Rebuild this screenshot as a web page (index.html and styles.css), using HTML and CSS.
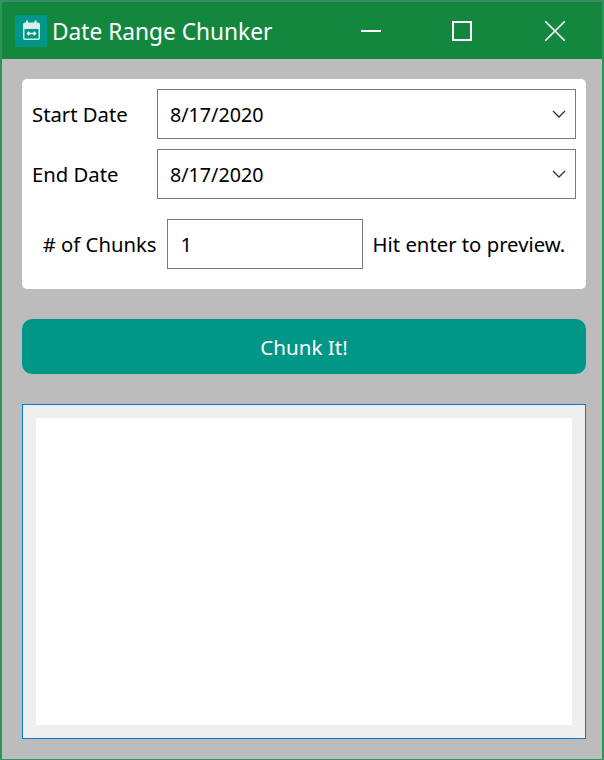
FILE: index.html
```html
<!DOCTYPE html>
<html lang="en">
<head>
    <meta charset="UTF-8">
    <meta name="viewport" content="width=device-width, initial-scale=1.0">
    <title>Date Range Chunker</title>
    <link rel="stylesheet" href="styles.css">
</head>
<body>
    <div class="window">
        <div class="title-bar">
            <div class="app-icon">
                <svg width="32" height="32" viewBox="0 0 32 32" fill="none">
                    <rect x="8" y="7.5" width="17" height="17.5" rx="2" fill="#d5efe9"/>
                    <rect x="9.5" y="14" width="14" height="9.5" fill="#009688"/>
                    <path d="M12 5.5v4M20.5 5.5v4" stroke="#d5efe9" stroke-width="2"/>
                    <path d="M12.5 18.5h8M14.2 16.7l-1.8 1.8 1.8 1.8M18.8 16.7l1.8 1.8-1.8 1.8" stroke="#fff" stroke-width="1.3"/>
                </svg>
            </div>
            <div class="title-text">Date Range Chunker</div>
            <div class="window-controls">
                <div class="win-btn">
                    <svg width="20" height="20" viewBox="0 0 20 20"><path d="M0 10h20" stroke="#fff" stroke-width="2"/></svg>
                </div>
                <div class="win-btn">
                    <svg width="20" height="20" viewBox="0 0 20 20" fill="none"><rect x="1" y="1" width="18" height="18" stroke="#fff" stroke-width="2"/></svg>
                </div>
                <div class="win-btn win-close">
                    <svg width="20" height="20" viewBox="0 0 20 20"><path d="M0 0L20 20M20 0L0 20" stroke="#eee" stroke-width="1.6"/></svg>
                </div>
            </div>
        </div>

        <div class="content">
            <div class="card">
                <div class="date-row">
                    <label class="date-label">Start Date</label>
                    <div class="combo">
                        <span>8/17/2020</span>
                        <svg class="chevron" width="14" height="8" viewBox="0 0 14 8" fill="none"><path d="M1 1l6 6 6-6" stroke="#333" stroke-width="1.3"/></svg>
                    </div>
                </div>
                <div class="date-row">
                    <label class="date-label">End Date</label>
                    <div class="combo">
                        <span>8/17/2020</span>
                        <svg class="chevron" width="14" height="8" viewBox="0 0 14 8" fill="none"><path d="M1 1l6 6 6-6" stroke="#333" stroke-width="1.3"/></svg>
                    </div>
                </div>
                <div class="chunk-row">
                    <label>&#35; of Chunks</label>
                    <input class="chunk-input" type="text" value="1">
                    <span>Hit enter to preview.</span>
                </div>
            </div>

            <button class="chunk-btn">Chunk It!</button>

            <div class="preview">
                <div class="preview-inner"></div>
            </div>
        </div>
    </div>
</body>
</html>
```

FILE: styles.css
```css
* {
    box-sizing: border-box;
}
html, body {
    margin: 0;
    padding: 0;
}
body {
    font-family: "Noto Sans", "Open Sans", sans-serif;
    font-size: 20.3px;
    color: #000;
}
.window {
    width: 604px;
    height: 760px;
    display: flex;
    flex-direction: column;
    background: #bcbcbc;
    border-left: 2px solid #2c9659;
    border-right: 2px solid #2c9659;
    border-top: 2px solid #3f8a68;
    border-bottom: 1px solid #2c9659;
}
.title-bar {
    height: 57px;
    flex: none;
    display: flex;
    align-items: center;
    padding-left: 13px;
    background: #14873f;
    color: #fff;
}
.app-icon {
    width: 32px;
    height: 32px;
    background: #009688;
    margin-top: 1px;
}
.title-text {
    margin-left: 5px;
    padding-top: 2px;
    font-size: 22.7px;
}
.window-controls {
    display: flex;
    margin-left: auto;
    margin-right: 37px;
    gap: 71px;
}
.win-btn {
    width: 20px;
    height: 20px;
}
.win-btn svg {
    display: block;
}
.win-close {
    margin-left: 2px;
}
.content {
    flex: 1;
    display: flex;
    flex-direction: column;
    padding: 20px 16px 20px 20px;
}
.card {
    background: #fff;
    border-radius: 5px;
    padding: 10px 10px 20px;
}
.date-row {
    display: flex;
    align-items: center;
    margin-bottom: 10px;
}
.date-label {
    width: 125px;
    flex: none;
}
.combo {
    flex: 1;
    height: 50px;
    display: flex;
    align-items: center;
    justify-content: space-between;
    padding: 0 9px 0 12px;
    border: 1px solid #7a7a7a;
    background: #fff;
    font-size: 19.7px;
}
.chevron {
    display: block;
}
.chunk-row {
    display: flex;
    align-items: center;
    justify-content: center;
    gap: 10px;
    margin-top: 20px;
}
.chunk-input {
    width: 196px;
    height: 50px;
    padding: 0 13px;
    border: 1px solid #7a7a7a;
    border-radius: 0;
    outline: none;
    font: inherit;
    color: #000;
}
.chunk-btn {
    height: 55px;
    flex: none;
    margin-top: 30px;
    border: none;
    border-radius: 10px;
    background: #009688;
    color: #fff;
    font: inherit;
    font-size: 20.6px;
}
.preview {
    flex: 1;
    margin-top: 30px;
    padding: 13px;
    background: #efefef;
    border: 1px solid #0078d7;
}
.preview-inner {
    height: 100%;
    background: #fff;
}
```
